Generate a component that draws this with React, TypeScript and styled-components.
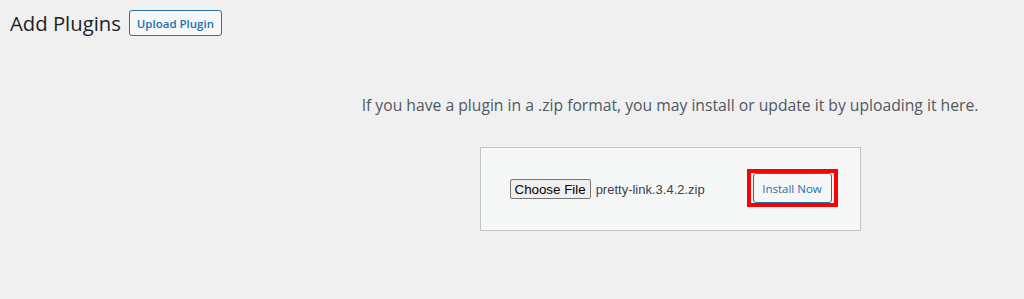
import styled, { createGlobalStyle } from 'styled-components';

const GlobalStyle = createGlobalStyle`
  html, body {
    margin: 0;
    padding: 0;
    background: #f0f0f1;
  }

  body {
    font-family: "Open Sans", "Noto Sans", sans-serif;
    color: #3c434a;
  }
`;

const App = () => {
  return (
    <Page>
      <GlobalStyle />
      <Header>
        <Title>Add Plugins</Title>
        <OutlineButton type="button">Upload Plugin</OutlineButton>
      </Header>

      <UploadArea>
        <Help>If you have a plugin in a .zip format, you may install or update it by uploading it here.</Help>
        <UploadForm>
          <FilePicker>
            <ChooseButton type="button">Choose File</ChooseButton>
            <FileName>pretty-link.3.4.2.zip</FileName>
          </FilePicker>
          <Highlight>
            <SubmitButton type="button">Install Now</SubmitButton>
          </Highlight>
        </UploadForm>
      </UploadArea>
    </Page>
  );
};

const Page = styled.div`
  width: 1024px;
  height: 299px;
  box-sizing: border-box;
  padding: 10px 10px 0;
`;

const Header = styled.div`
  display: flex;
  align-items: center;
  gap: 8px;
`;

const Title = styled.h1`
  margin: 0;
  font-size: 20.3px;
  font-weight: 400;
  line-height: 26px;
  color: #1d2327;
`;

const OutlineButton = styled.button`
  width: 93px;
  height: 26px;
  padding: 0;
  border: 1px solid #2271b1;
  border-radius: 3px;
  background: #f6f7f7;
  color: #2271b1;
  font-family: inherit;
  font-size: 11.5px;
  font-weight: 600;
`;

const UploadArea = styled.div`
  display: flex;
  flex-direction: column;
  align-items: center;
  margin-left: 316px;
  padding-top: 56px;
`;

const Help = styled.p`
  margin: 0;
  font-size: 15.7px;
  line-height: 26px;
  color: #50575e;
  white-space: nowrap;
`;

const UploadForm = styled.div`
  display: flex;
  align-items: center;
  justify-content: space-between;
  box-sizing: border-box;
  width: 381px;
  height: 84px;
  margin-top: 29px;
  padding: 0 22px 0 29px;
  border: 1px solid #c3c4c7;
  background: #f6f7f7;
`;

const FilePicker = styled.div`
  display: flex;
  align-items: center;
  gap: 5px;
`;

const ChooseButton = styled.button`
  height: 20px;
  padding: 0 4px;
  border: 1px solid #767676;
  border-radius: 2px;
  background: #efefef;
  color: #000;
  font-family: "Liberation Sans", Arial, sans-serif;
  font-size: 13.33px;
`;

const FileName = styled.span`
  font-family: "Liberation Sans", Arial, sans-serif;
  font-size: 13px;
  color: #3c434a;
`;

const Highlight = styled.div`
  display: flex;
  padding: 0 2px;
  margin-bottom: 2px;
  border: 4px solid #ff0000;
`;

const SubmitButton = styled.button`
  width: 79px;
  height: 30px;
  padding: 0;
  border: 1px solid #2271b1;
  border-radius: 3px;
  background: #f6f7f7;
  color: #2271b1;
  font-family: inherit;
  font-size: 11.5px;
`;

export default App;
